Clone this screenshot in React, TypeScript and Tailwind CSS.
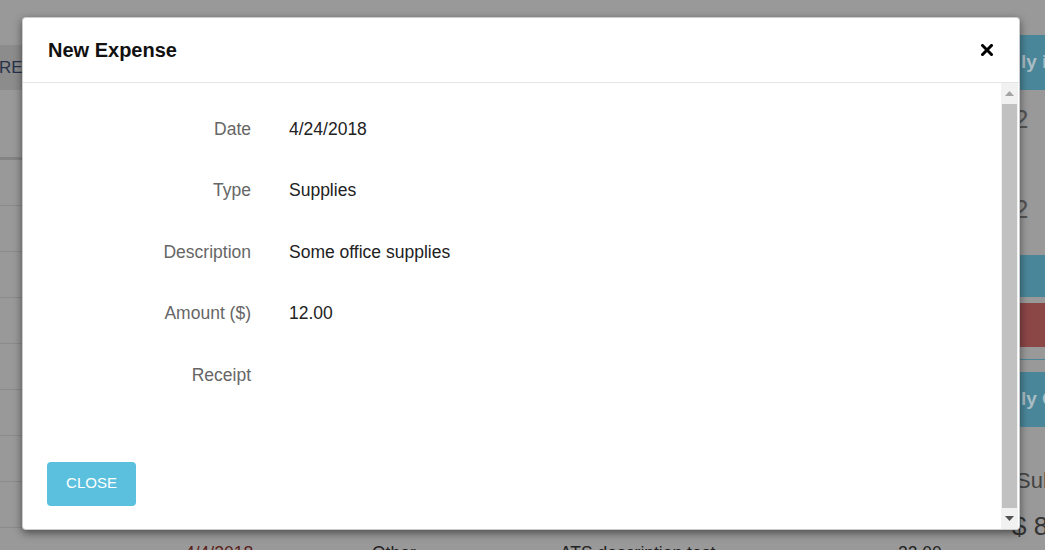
import React from 'react';

const rows = [
  { label: 'Date', value: '4/24/2018' },
  { label: 'Type', value: 'Supplies' },
  { label: 'Description', value: 'Some office supplies' },
  { label: 'Amount ($)', value: '12.00' },
  { label: 'Receipt', value: '' },
];

const Background: React.FC = () => (
  <div className="flex w-full h-full">
    {/* Table page behind the overlay */}
    <div className="w-[1008px] shrink-0 flex flex-col pt-[45px]">
      <div className="h-[45px] shrink-0 bg-[#8c8c8c] flex items-center text-[17px] text-[#26324a] -ml-[1px]">
        RE<span className="text-[#8a5a20]">C</span>
      </div>
      <div className="h-[70px] shrink-0 border-b-[3px] border-[#848484]" />
      {Array.from({ length: 8 }).map((_, i) => (
        <div key={i} className="h-[46px] shrink-0 border-b border-[#8b8b8b]" />
      ))}
      <div className="h-[46px] shrink-0 flex items-center pt-[4px] text-[17.5px] text-[#222]">
        <span className="w-[187px] pl-[185px] box-content text-[#5a2219]">4/4/2018</span>
        <span className="w-[188px]">Other</span>
        <span className="w-[338px]">ATS description test</span>
        <span>22.00</span>
      </div>
    </div>

    {/* Sidebar behind the overlay */}
    <div className="w-[240px] shrink-0 flex flex-col pt-[35px]">
      <div className="h-[55px] shrink-0 bg-[#4a8699] flex items-center pl-[13px] text-[19px] font-bold text-[#a9bdc4]">
        ly income
      </div>
      <div className="h-[165px] shrink-0 flex flex-col pl-[6px] text-[26px] leading-none text-[#555] font-light">
        <span className="mt-[16px]">2</span>
        <span className="mt-[64px]">2</span>
      </div>
      <div className="h-[42px] shrink-0 bg-[#4a8699]" />
      <div className="h-[44px] shrink-0 mt-[6px] bg-[#8b4646]" />
      <div className="h-[1px] shrink-0 mt-[12px] bg-[#4a8699]" />
      <div className="h-[55px] shrink-0 mt-[12px] bg-[#4a8699] flex items-center pl-[13px] text-[19px] font-bold text-[#a9bdc4]">
        ly Outgoing
      </div>
      <div className="mt-[43px] pl-[8px] text-[22px] leading-none text-[#444]">Subtotal</div>
      <div className="mt-[21px] pl-[4px] text-[26px] leading-none text-[#333]">$ 82.00</div>
    </div>
  </div>
);

const Scrollbar: React.FC = () => (
  <div className="w-[17px] shrink-0 bg-[#f1f1f1] flex flex-col items-center mr-[1px]">
    <div className="h-[21px] w-full flex items-center justify-center">
      <svg width="9" height="5" viewBox="0 0 9 5">
        <path d="M0 5 L4.5 0 L9 5 Z" fill="#a3a3a3" />
      </svg>
    </div>
    <div className="w-[15px] flex-1 bg-[#c1c1c1]" />
    <div className="h-[21px] w-full flex items-center justify-center">
      <svg width="9" height="5" viewBox="0 0 9 5">
        <path d="M0 0 L9 0 L4.5 5 Z" fill="#505050" />
      </svg>
    </div>
  </div>
);

export default function App() {
  return (
    <div className="relative w-[1045px] h-[550px] overflow-hidden bg-[#999] font-['Liberation_Sans',Arial,sans-serif]">
      <Background />

      {/* Modal */}
      <div className="absolute left-[22px] top-[17px] w-[998px] h-[513px] bg-white border border-black/20 rounded-[4px] shadow-[0_3px_9px_rgba(0,0,0,0.5)] flex flex-col overflow-hidden">
        <div className="h-[65px] shrink-0 border-b border-[#e5e5e5] flex items-center justify-between pl-[25px] pr-[26px]">
          <h4 className="text-[20px] font-bold text-[#111]">New Expense</h4>
          <button className="text-black">
            <svg width="12" height="12" viewBox="0 0 12 12">
              <path d="M1.5 1.5 L10.5 10.5 M10.5 1.5 L1.5 10.5" stroke="#000" strokeWidth="3" strokeLinecap="square" />
            </svg>
          </button>
        </div>

        <div className="flex flex-1 min-h-0">
          <div className="flex-1 pl-[24px] pt-[15px] flex flex-col">
            {rows.map((r) => (
              <div key={r.label} className="h-[61.5px] shrink-0 flex items-center text-[17.5px]">
                <div className="w-[204px] text-right text-[#666]">{r.label}</div>
                <div className="ml-[38px] text-[#222]">{r.value}</div>
              </div>
            ))}
            <div className="mt-[56px]">
              <button className="h-[44px] w-[89px] bg-[#5bc0de] rounded-[4px] text-white text-[15px] uppercase">
                Close
              </button>
            </div>
          </div>
          <Scrollbar />
        </div>
      </div>
    </div>
  );
}
